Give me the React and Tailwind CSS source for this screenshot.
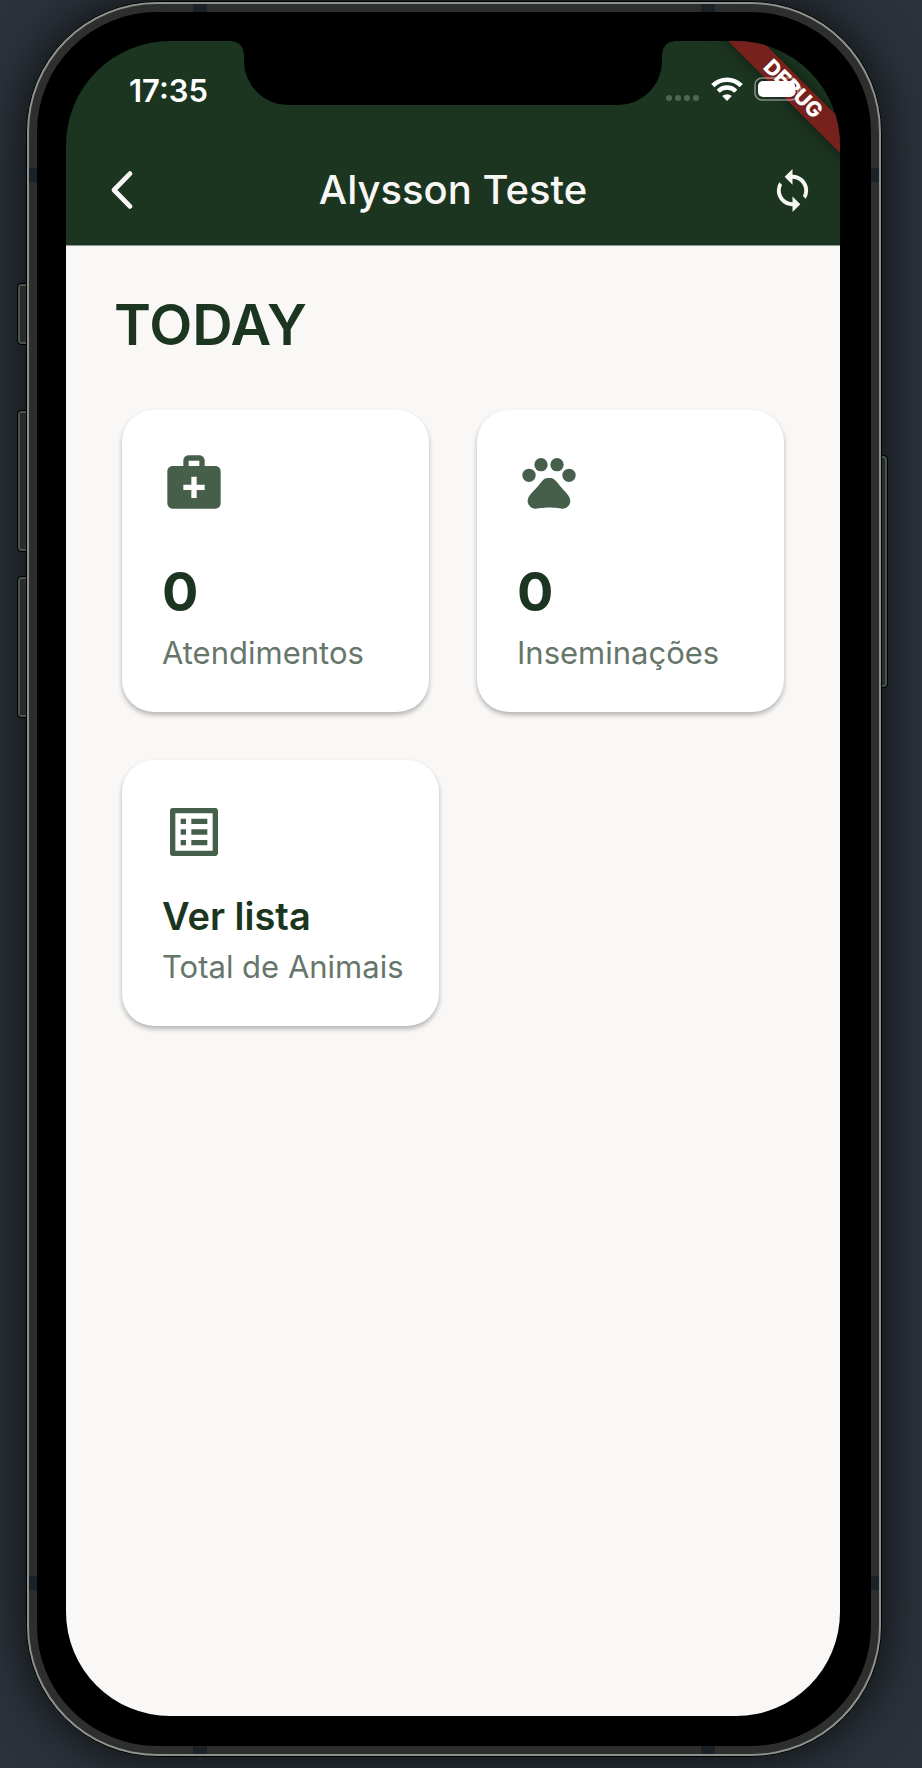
import { MdMedicalServices, MdPets, MdListAlt, MdSync } from "react-icons/md";

function SideButton({ className }) {
  return (
    <span
      aria-hidden="true"
      className={`absolute border-2 border-[#46564a] bg-[#2b2b2b] outline outline-1 outline-black ${className}`}
    />
  );
}

function AntennaBand({ className }) {
  return <span aria-hidden="true" className={`absolute bg-[#1b2227] ${className}`} />;
}

function WifiIcon() {
  return (
    <svg viewBox="0 0 32 24" className="h-6 w-8" fill="none" aria-label="Wi-Fi">
      <path d="M1.8 8.6a20 20 0 0 1 28.4 0" stroke="#fff" strokeWidth="4.6" />
      <path d="M7.2 14.2a12.4 12.4 0 0 1 17.6 0" stroke="#fff" strokeWidth="4.4" />
      <path d="M16 24l-4.8-4.9a7 7 0 0 1 9.6 0z" fill="#fff" />
    </svg>
  );
}

function BatteryIcon() {
  return (
    <svg viewBox="0 0 48 24" className="h-6 w-12" fill="none" aria-label="Battery">
      <rect x="1" y="1" width="43" height="22" rx="7" stroke="#fff" strokeOpacity="0.45" strokeWidth="1.6" />
      <rect x="4" y="4" width="37" height="16" rx="5" fill="#fff" />
      <path d="M45.5 8.5c3 1 3 6 0 7z" fill="#fff" fillOpacity="0.45" />
    </svg>
  );
}

function StatusBar() {
  return (
    <div className="relative z-20 grid h-[92px] grid-cols-[1fr_418px_1fr]">
      <div className="flex items-start justify-end pt-8 pr-9 text-[31px] leading-9 font-semibold text-white">
        17:35
      </div>
      <div className="relative h-16 rounded-b-[44px] bg-black">
        <span className="absolute top-0 right-full size-3 bg-[radial-gradient(circle_at_bottom_left,transparent_11px,#000_12px)]" />
        <span className="absolute top-0 left-full size-3 bg-[radial-gradient(circle_at_bottom_right,transparent_11px,#000_12px)]" />
      </div>
      <div className="flex items-start pt-9 pl-1">
        <div className="flex h-6 items-end gap-[3px]">
          {[0, 1, 2, 3].map((dot) => (
            <span key={dot} className="size-[6px] rounded-full bg-[#4f6653]" />
          ))}
        </div>
        <div className="ml-3 flex gap-[11px]">
          <WifiIcon />
          <BatteryIcon />
        </div>
      </div>
    </div>
  );
}

function AppBar() {
  return (
    <div className="grid h-28 grid-cols-[1fr_auto_1fr] items-center px-6 pt-[2px]">
      <button type="button" aria-label="Back" className="flex h-12 w-16 items-center justify-center">
        <svg viewBox="0 0 24 40" className="h-10 w-6" fill="none" aria-hidden="true">
          <path d="M20 3.6L4 20l16 16.4" stroke="#f9f7f5" strokeWidth="4.8" strokeLinecap="round" strokeLinejoin="round" />
        </svg>
      </button>
      <h1 className="text-[40px] leading-[48px] font-medium text-[#f9f7f5]">Alysson Teste</h1>
      <button type="button" aria-label="Sync" className="justify-self-end text-[#f9f7f5]">
        <MdSync className="size-[47px]" />
      </button>
    </div>
  );
}

function StatCard({ icon: Icon, value, label }) {
  return (
    <button
      type="button"
      className="flex flex-col items-start rounded-[32px] bg-white px-10 pt-10 pb-[38px] text-left shadow-[0_3px_5px_rgba(0,0,0,0.28)]"
    >
      <Icon className="size-16 text-[#465f4b]" />
      <span className="mt-11 text-[54px] leading-[68px] font-bold text-[#1b3520]">{value}</span>
      <span className="mt-[6px] text-[31px] leading-[42px] text-[#66766a]">{label}</span>
    </button>
  );
}

function ListCard() {
  return (
    <button
      type="button"
      className="flex w-[317px] flex-col items-start rounded-[32px] bg-white px-10 pt-10 pb-[38px] text-left whitespace-nowrap shadow-[0_3px_5px_rgba(0,0,0,0.28)]"
    >
      <MdListAlt className="size-16 text-[#465f4b]" />
      <span className="mt-7 text-[38px] leading-[48px] font-semibold text-[#1b3520]">Ver lista</span>
      <span className="mt-[6px] text-[31px] leading-[42px] text-[#66766a]">Total de Animais</span>
    </button>
  );
}

function DebugBanner() {
  return (
    <div className="absolute top-9 right-[-53px] z-10 flex h-6 w-[200px] rotate-45 items-center justify-center bg-[#76211b] text-[21px] leading-6 font-extrabold text-white shadow-[0_0_12px_rgba(0,0,0,0.5)]">
      DEBUG
    </div>
  );
}

export default function App() {
  return (
    <div className="flex min-h-screen flex-col bg-[#2b323a] pt-px pr-10 pb-[11px] pl-[26px] font-['Inter',sans-serif]">
      <div className="relative flex flex-1 flex-col rounded-[131px] shadow-[0_0_50px_rgba(0,0,0,0.75)]">
        <SideButton className="top-[283px] left-[-8px] h-[60px] w-3 rounded-l-[3px]" />
        <SideButton className="top-[410px] left-[-8px] h-[140px] w-3 rounded-l-[3px]" />
        <SideButton className="top-[576px] left-[-8px] h-[140px] w-3 rounded-l-[3px]" />
        <SideButton className="top-[455px] right-[-5px] h-[231px] w-3 rounded-r-[3px]" />

        <div className="relative flex flex-1 flex-col rounded-[131px] border border-black bg-[#8b928b] p-[2px]">
          <div className="relative flex flex-1 flex-col rounded-[128px] bg-[#2e2e2e] p-2">
            <AntennaBand className="top-[164px] left-0 h-[14px] w-full" />
            <AntennaBand className="bottom-[164px] left-0 h-[14px] w-full" />
            <AntennaBand className="top-0 left-[164px] h-full w-[14px]" />
            <AntennaBand className="top-0 right-[164px] h-full w-[14px]" />

            <div className="relative flex flex-1 flex-col rounded-[120px] bg-black pt-[29px] pr-[31px] pb-[30px] pl-[29px]">
              <div className="relative flex flex-1 flex-col overflow-hidden rounded-[104px]">
                <header className="border-b border-[#8d998e] bg-[#1b3520]">
                  <StatusBar />
                  <AppBar />
                </header>
                <DebugBanner />
                <main className="flex flex-1 flex-col bg-[#f9f8f6] px-14 pt-[43px]">
                  <h2 className="-ml-2 text-[56px] leading-[72px] font-semibold text-[#1b3520]">TODAY</h2>
                  <div className="mt-[49px] grid grid-cols-2 gap-12">
                    <StatCard icon={MdMedicalServices} value="0" label="Atendimentos" />
                    <StatCard icon={MdPets} value="0" label="Inseminações" />
                  </div>
                  <div className="mt-12 flex">
                    <ListCard />
                  </div>
                </main>
              </div>
            </div>
          </div>
        </div>
      </div>
    </div>
  );
}
